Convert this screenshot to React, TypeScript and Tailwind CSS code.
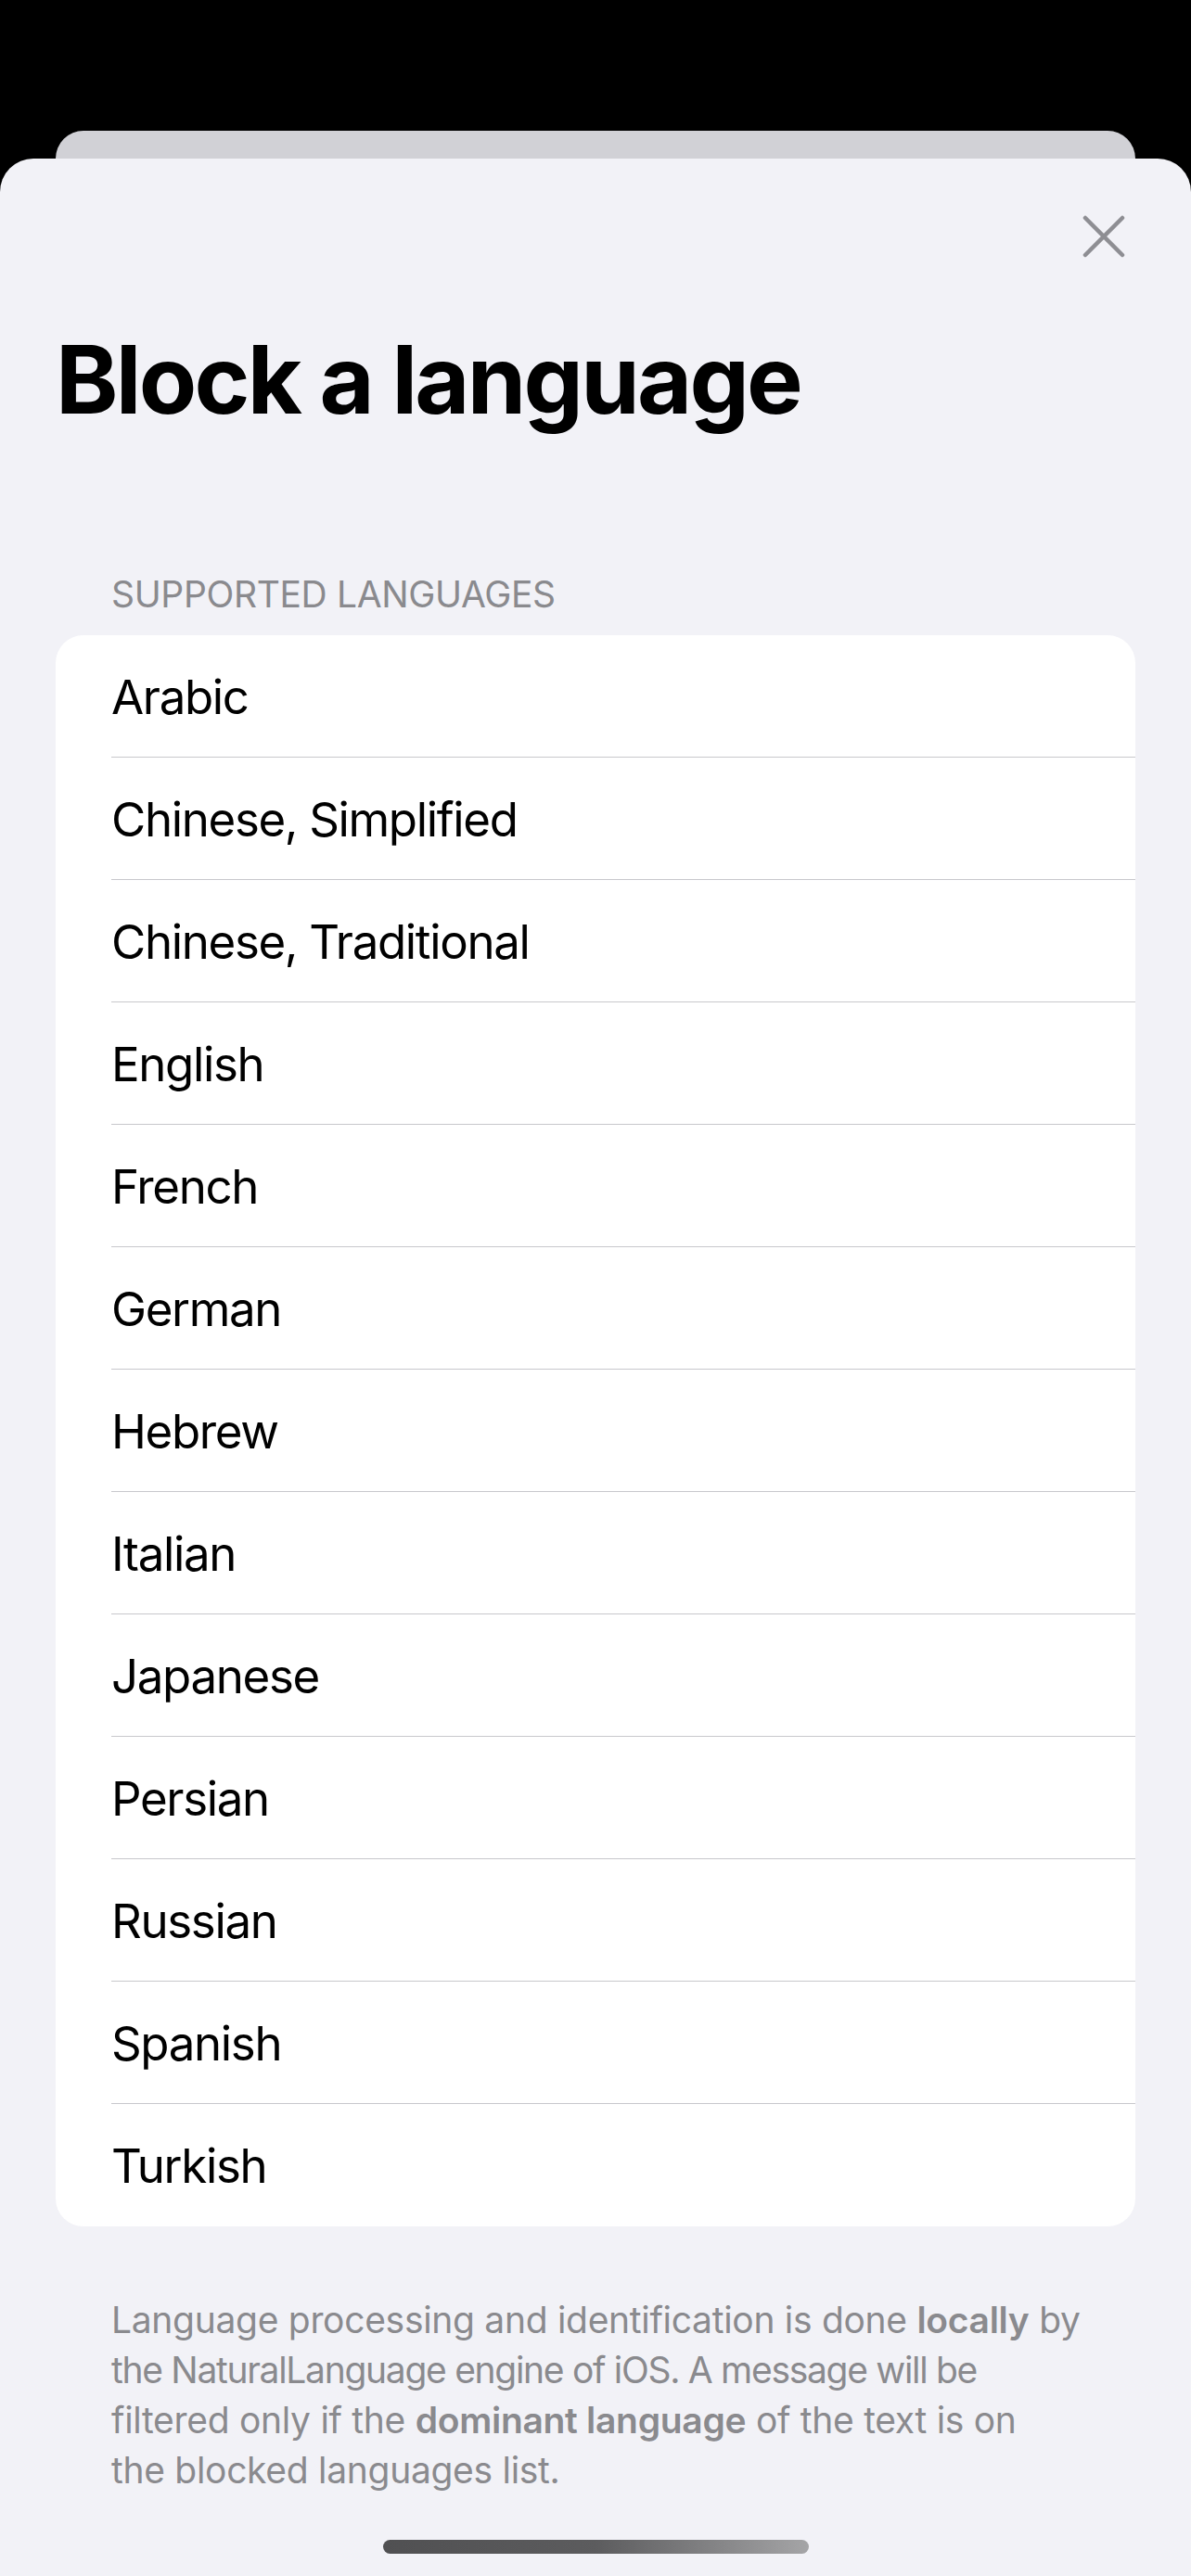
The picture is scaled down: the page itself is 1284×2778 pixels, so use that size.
import React from "react";

const languages = [
  "Arabic",
  "Chinese, Simplified",
  "Chinese, Traditional",
  "English",
  "French",
  "German",
  "Hebrew",
  "Italian",
  "Japanese",
  "Persian",
  "Russian",
  "Spanish",
  "Turkish",
];

export default function App() {
  return (
    <div
      className="min-h-screen bg-black flex flex-col"
      style={{ fontFamily: "Inter, 'Noto Sans', 'Liberation Sans', sans-serif" }}
    >
      <div className="h-[141px] shrink-0" />
      <div className="h-[30px] mx-[60px] rounded-t-[30px] bg-[#d1d1d6] shrink-0" />
      <div className="flex-1 rounded-t-[36px] bg-[#f2f2f7] flex flex-col pt-[61px]">
        <div className="flex justify-end pr-[71px]">
          <svg width="46" height="46" viewBox="0 0 46 46" fill="none">
            <path
              d="M3 3 L43 43 M43 3 L3 43"
              stroke="#8e8e93"
              strokeWidth="4.5"
              strokeLinecap="round"
            />
          </svg>
        </div>
        <h1 className="mt-[70px] pl-[60px] text-[102px] leading-[123px] font-bold text-black tracking-[-2.75px]">
          Block a language
        </h1>
        <div className="mt-[146px] pl-[120px] text-[39px] leading-[47px] text-[#8a8a8e] tracking-[-0.35px]">
          SUPPORTED LANGUAGES
        </div>
        <div className="mt-[21px] mx-[60px] bg-white rounded-[30px] overflow-hidden">
          {languages.map((lang, i) => (
            <div key={lang} className="h-[132px] pl-[60px]">
              <div
                className={
                  i < languages.length - 1
                    ? "h-full flex items-center pt-[3px] border-b border-[#c8c8cc] text-[51px] text-black tracking-[-1.35px]"
                    : "h-full flex items-center pt-[3px] text-[51px] text-black tracking-[-1.35px]"
                }
              >
                {lang}
              </div>
            </div>
          ))}
        </div>
        <div className="mt-[74px] pl-[120px] text-[39px] leading-[54px] text-[#8a8a8e] tracking-[-0.3px] whitespace-nowrap">
          <div>
            Language processing and identification is done{" "}
            <span className="font-semibold">locally</span> by
          </div>
          <div className="tracking-[-1.3px]">the NaturalLanguage engine of iOS. A message will be</div>
          <div>
            filtered only if the{" "}
            <span className="font-semibold">dominant language</span> of the text is on
          </div>
          <div>the blocked languages list.</div>
        </div>
        <div className="mt-[48px] flex justify-center">
          <div className="w-[459px] h-[15px] rounded-full bg-gradient-to-r from-[#505052] via-[#5c5c5e] to-[#a5a5a7]" />
        </div>
      </div>
    </div>
  );
}
